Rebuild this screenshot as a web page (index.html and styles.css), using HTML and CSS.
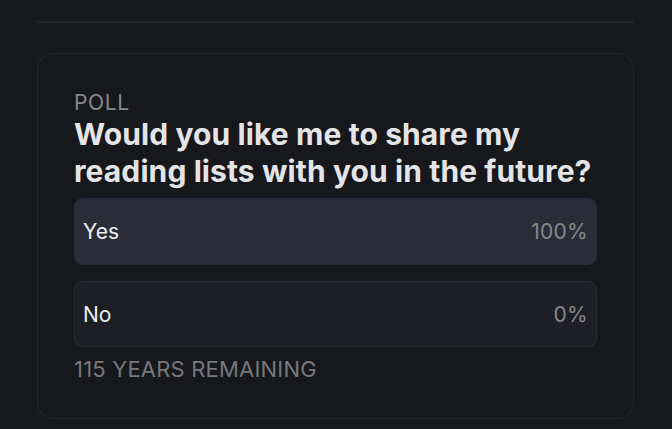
FILE: index.html
```html
<!DOCTYPE html>
<html>
<head>
<meta charset="utf-8">
<link rel="stylesheet" href="styles.css">
</head>
<body>
<div class="page">
  <hr class="divider">
  <section class="poll">
    <div class="label">POLL</div>
    <h2 class="question">Would you like me to share my reading lists with you in the future?</h2>
    <div class="options">
      <div class="option selected"><span class="opt-text">Yes</span><span class="pct">100%</span></div>
      <div class="option"><span class="opt-text">No</span><span class="pct">0%</span></div>
    </div>
    <div class="remaining">115 YEARS REMAINING</div>
  </section>
</div>
</body>
</html>
```
FILE: styles.css
```css
html, body {
  margin: 0;
  padding: 0;
  background: #17181c;
}
body {
  font-family: Inter, "Noto Sans", sans-serif;
  width: 672px;
  height: 429px;
  overflow: hidden;
}
.page {
  padding: 21px 38px 0 37px;
}
.divider {
  margin: 0;
  border: 0;
  height: 2px;
  background: #222328;
}
.poll {
  margin-top: 30px;
  border: 1px solid #24252a;
  border-radius: 16px;
  padding: 38px 36px 36px 36px;
  height: 366px;
  box-sizing: border-box;
}
.label {
  font-size: 21px;
  line-height: 22px;
  letter-spacing: 0.6px;
  color: #86888c;
  font-weight: 400;
}
.question {
  margin: 2px 0 0 0;
  font-size: 30px;
  line-height: 37px;
  font-weight: 700;
  color: #e4e4e6;
  letter-spacing: 0.1px;
  max-width: 522px;
}
.options {
  margin-top: 8px;
  display: flex;
  flex-direction: column;
  gap: 16px;
}
.option {
  height: 66px;
  box-sizing: border-box;
  border-radius: 9px;
  border: 1px solid #2b2d35;
  background: #1e1f26;
  display: flex;
  align-items: center;
  justify-content: space-between;
  padding: 0 8px 0 8px;
  font-size: 21px;
}
.option.selected {
  height: 67px;
  background: #2a2d39;
  border-color: #2a2d39;
}
.opt-text {
  color: #eeeef0;
}
.pct {
  color: #86888c;
  letter-spacing: 0.3px;
}
.remaining {
  margin-top: 10px;
  font-size: 22px;
  line-height: 24px;
  letter-spacing: 0.2px;
  color: #76787d;
}
```
